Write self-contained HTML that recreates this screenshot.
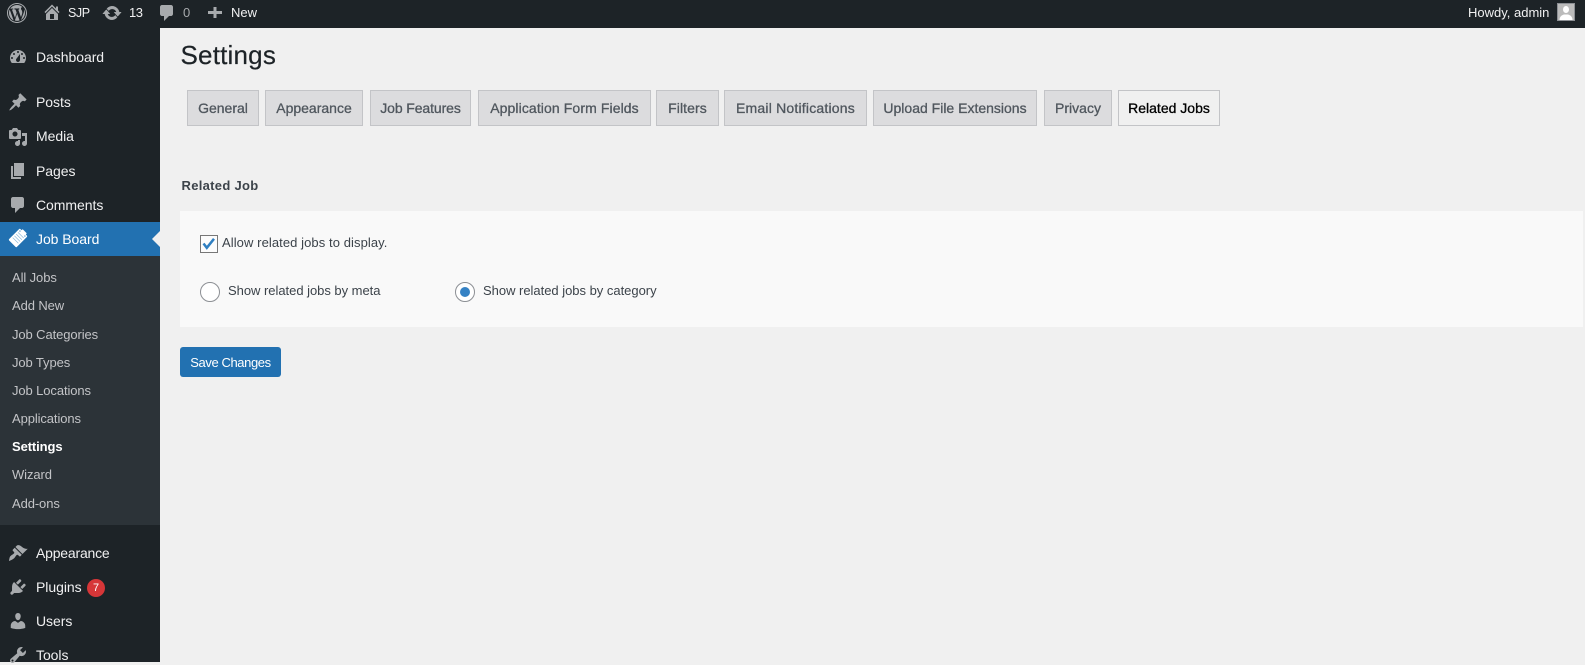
<!DOCTYPE html>
<html><head><meta charset="utf-8"><title>Settings</title>
<style>
*{box-sizing:border-box}
html,body{margin:0;padding:0;width:1585px;height:662px;overflow:hidden;background:#f0f0f0;font-family:"Liberation Sans",Arial,sans-serif;font-size:14px;color:#3c434a}
.a{position:absolute;white-space:nowrap;line-height:20px;height:20px}
.box{position:absolute}
svg.i{position:absolute;fill:#a7aaad;width:20px;height:20px}
.m{color:#f0f0f1;left:36px;font-size:14px;letter-spacing:-.05px}
.s{color:#c3c4c7;left:12px;font-size:13px;letter-spacing:-.1px}
.b{color:#f0f0f1;font-size:13px}
.t{position:absolute;top:90px;height:36px;background:#dcdcde;border:1px solid #c3c4c7;color:#50575e;font-size:14px;line-height:35px;text-align:center;white-space:nowrap;-webkit-text-stroke:.3px currentColor}
</style></head><body>

<div class="box" style="left:0;top:0;width:1585px;height:28px;background:#1d2327"></div>
<div class="box" style="left:0;top:28px;width:160px;height:634px;background:#1d2327"></div>
<div class="box" style="left:0;top:256px;width:160px;height:269px;background:#2c3338"></div>
<div class="box" style="left:0;top:222px;width:160px;height:34px;background:#2271b1"></div>
<div class="box" style="left:152px;top:231px;width:0;height:0;border:8px solid transparent;border-left:0;border-right-color:#f0f0f0"></div>

<!-- admin bar -->
<svg class="i" style="left:7px;top:3px" viewBox="0 0 20 20"><path d="M20 10c0-5.52-4.48-10-10-10S0 4.48 0 10s4.48 10 10 10 10-4.48 10-10zM10 1.01c4.96 0 8.99 4.03 8.99 8.99s-4.03 8.99-8.99 8.99S1.01 14.96 1.01 10 5.04 1.01 10 1.01zM8.01 14.82L4.96 6.61c.49-.03 1.05-.08 1.05-.08.43-.05.38-1.01-.06-.99 0 0-1.29.1-2.13.1-.15 0-.33 0-.52-.01 1.44-2.17 3.9-3.6 6.7-3.6 2.09 0 3.99.79 5.41 2.09-.6-.1-1.45.35-1.45 1.42 0 .66.38 1.22.79 1.88.31.54.5 1.22.5 2.21 0 1.34-1.27 4.48-1.27 4.48l-2.71-7.5c.48-.03.75-.16.75-.16.43-.05.38-1.1-.05-1.08 0 0-1.3.11-2.14.11-.78 0-2.11-.11-2.11-.11-.43-.02-.48 1.06-.05 1.08l.84.08 1.12 3.04zm6.02 2.15L16.64 10s.67-1.69.39-3.81c.63 1.14.94 2.42.94 3.81 0 2.96-1.56 5.58-3.94 7.02v-.05zM2.68 6.54L6.64 17.4c-2.77-1.34-4.67-4.18-4.67-7.4 0-1.24.28-2.41.71-3.46zM10.13 10.74l2.44 6.68c-.79.28-1.63.43-2.5.43-.76 0-1.5-.11-2.2-.32z"/></svg>
<svg class="i" style="left:42px;top:2px" viewBox="0 0 20 20"><path fill-rule="evenodd" d="M16 8.5l1.53 1.53-1.06 1.06L10 4.62l-6.47 6.47-1.06-1.06L10 2.5l4 4v-2h2v4zm-6-2.46l6 5.99V18H4v-5.97zM12 17v-5H8v5h4z"/></svg>
<span class="a b" style="left:68px;top:3px;font-size:12.5px;letter-spacing:-.4px">SJP</span>
<svg class="i" style="left:102px;top:3px" viewBox="0 0 20 20"><path stroke="#a7aaad" stroke-width=".5" d="M10.2 3.28c3.53 0 6.43 2.61 6.92 6h2.08l-3.5 4-3.5-4h2.32c-.45-1.97-2.21-3.45-4.32-3.45-1.45 0-2.73.71-3.54 1.78L4.95 5.66C6.23 4.2 8.11 3.28 10.2 3.28zm-.4 13.44c-3.52 0-6.43-2.61-6.92-6H.8l3.5-4c1.17 1.33 2.33 2.67 3.5 4H5.48c.45 1.97 2.21 3.45 4.32 3.45 1.45 0 2.73-.71 3.54-1.78l1.71 1.95c-1.28 1.46-3.15 2.38-5.25 2.38z"/></svg>
<span class="a b" style="left:129px;top:3px;letter-spacing:-.5px">13</span>
<svg class="i" style="left:157px;top:3px" viewBox="0 0 20 20"><path d="M5 2h9c1.1 0 2 .9 2 2v7c0 1.1-.9 2-2 2h-2l-5 5v-5H5c-1.1 0-2-.9-2-2V4c0-1.1.9-2 2-2z"/></svg>
<span class="a b" style="left:183px;top:3px;color:#a7aaad">0</span>
<svg class="i" style="left:205px;top:3px" viewBox="0 0 20 20"><path d="M3 8h5.500V4h3v4H17v3h-5.500v4h-3v-4H3z"/></svg>
<span class="a b" style="left:231px;top:3px">New</span>
<span class="a b" style="left:1468px;top:3px">Howdy, admin</span>
<div class="box" style="left:1557px;top:3px;width:18px;height:18px;background:#bbb;border:1px solid #8c8f94;overflow:hidden">
<svg width="16" height="16" viewBox="0 0 16 16" style="display:block"><ellipse cx="8" cy="5.500" rx="3" ry="3.500" fill="#fff"/><path d="M1.500 16c0-3.500 2.500-5 4.500-5.500h4c2 .5 4.500 2 4.500 5.500z" fill="#fff"/></svg></div>

<!-- menu -->
<svg class="i" style="left:8px;top:47px" viewBox="0 0 20 20"><path fill-rule="evenodd" d="M3.76 16h12.48c1.1-1.37 1.76-3.11 1.76-5 0-4.42-3.58-8-8-8s-8 3.58-8 8c0 1.89.66 3.63 1.76 5zM10 4c.55 0 1 .45 1 1s-.45 1-1 1-1-.45-1-1 .45-1 1-1zM6 6c.55 0 1 .45 1 1s-.45 1-1 1-1-.45-1-1 .45-1 1-1zm8 0c.55 0 1 .45 1 1s-.45 1-1 1-1-.45-1-1 .45-1 1-1zm-5.37 5.55L12 7v6c0 1.1-.9 2-2 2s-2-.9-2-2c0-.57.24-1.08.63-1.45zM4 10c.55 0 1 .45 1 1s-.45 1-1 1-1-.45-1-1 .45-1 1-1zm12 0c.55 0 1 .45 1 1s-.45 1-1 1-1-.45-1-1 .45-1 1-1z"/></svg>
<span class="a m" style="top:47px">Dashboard</span>
<svg class="i" style="left:8px;top:92px" viewBox="0 0 20 20"><path d="M10.44 3.02l1.82-1.82 6.36 6.35-1.83 1.82c-1.05-.68-2.48-.57-3.41.36l-.75.75c-.92.93-1.04 2.35-.35 3.41l-1.83 1.82-2.41-2.41-2.8 2.79c-.42.42-3.38 2.71-3.8 2.29s1.86-3.39 2.28-3.81l2.79-2.79L4.1 9.36l1.83-1.82c1.05.69 2.48.57 3.4-.36l.75-.75c.93-.92 1.05-2.35.36-3.41z"/></svg>
<span class="a m" style="top:92px">Posts</span>
<svg class="i" style="left:8px;top:127px" viewBox="0 0 20 20"><path fill-rule="evenodd" d="M13 11V4c0-.55-.45-1-1-1h-1.670L9 1H5L3.670 3H2c-.55 0-1 .45-1 1v7c0 .55.45 1 1 1h10c.55 0 1-.45 1-1zM7 4.500c1.380 0 2.500 1.120 2.500 2.500S8.380 9.500 7 9.500 4.500 8.380 4.500 7 5.620 4.500 7 4.500zM14 6h5v10.500c0 1.380-1.120 2.500-2.500 2.500S14 17.880 14 16.500s1.120-2.500 2.500-2.500c.17 0 .34.02.5.05V9h-3V6zm-4 8.050V13h2v3.500c0 1.380-1.120 2.500-2.500 2.500S7 17.880 7 16.500 8.120 14 9.500 14c.17 0 .34.02.5.05z"/></svg>
<span class="a m" style="top:126px">Media</span>
<svg class="i" style="left:8px;top:161px" viewBox="0 0 20 20"><path d="M6 15V2h10v13H6zm-1 1h8v2H3V5h2v11z"/></svg>
<span class="a m" style="top:161px">Pages</span>
<svg class="i" style="left:8px;top:195px" viewBox="0 0 20 20"><path d="M5 2h9c1.100 0 2 .9 2 2v7c0 1.100-.9 2-2 2h-2l-5 5v-5H5c-1.100 0-2-.9-2-2V4c0-1.100.9-2 2-2z"/></svg>
<span class="a m" style="top:195px">Comments</span>
<svg class="box" style="left:6px;top:226px" width="24" height="24" viewBox="0 0 24 24"><g transform="rotate(45 12 12)"><rect x="6.500" y="4" width="11" height="16" rx="1" fill="#fff"/><rect x="9" y="2.500" width="6" height="2.500" rx=".5" fill="#fff"/><path d="M8 8h8M8 10.500h8M8 13h8M8 15.500h8" stroke="#8fbbdc" stroke-width=".7" fill="none"/><circle cx="8.500" cy="5.700" r=".6" fill="#2271b1"/><circle cx="15.500" cy="5.700" r=".6" fill="#2271b1"/></g></svg>
<span class="a m" style="top:229px;color:#fff">Job Board</span>

<span class="a s" style="top:268px">All Jobs</span>
<span class="a s" style="top:296px">Add New</span>
<span class="a s" style="top:325px">Job Categories</span>
<span class="a s" style="top:353px">Job Types</span>
<span class="a s" style="top:381px">Job Locations</span>
<span class="a s" style="top:409px">Applications</span>
<span class="a s" style="top:437px;color:#fff;font-weight:bold">Settings</span>
<span class="a s" style="top:465px">Wizard</span>
<span class="a s" style="top:494px">Add-ons</span>

<svg class="i" style="left:8px;top:543px" viewBox="0 0 20 20"><path d="M14.480 11.060L7.410 3.990l1.500-1.500c.5-.56 2.300-.47 3.510.32 1.210.8 1.430 1.280 2.910 2.100 1.180.64 2.450 1.260 4.450.85zm-.71.71L6.700 4.700 4.930 6.470c-.39.39-.39 1.020 0 1.410l1.060 1.060c.39.39.39 1.030 0 1.420-.6.6-1.430 1.110-2.210 1.690-.35.26-.7.53-1.010.84C1.430 13.250 1 18 1 18s3.750-1.430 5.110-2.770c.31-.31.58-.66.84-1.010.58-.78 1.090-1.610 1.690-2.210.39-.39 1.030-.39 1.420 0l1.060 1.060c.39.39 1.020.39 1.410 0z"/></svg>
<span class="a m" style="top:543px;letter-spacing:-.2px">Appearance</span>
<svg class="i" style="left:8px;top:577px" viewBox="0 0 20 20"><path d="M13.110 4.360L9.870 7.600 8 5.730l3.240-3.240c.35-.34 1.050-.2 1.560.32.52.51.66 1.210.31 1.550zm-8 1.770l.91-1.120 9.010 9.010-1.190.84c-.71.71-2.630 1.160-3.820 1.160H6.140L4.900 17.260c-.59.59-1.540.59-2.120 0-.59-.58-.59-1.530 0-2.120l1.240-1.240v-3.880c0-1.130.4-3.190 1.090-3.890zm7.260 3.970l3.240-3.240c.34-.35 1.040-.21 1.550.31.52.51.66 1.210.31 1.550l-3.240 3.250z"/></svg>
<span class="a m" style="top:577px">Plugins</span>
<div class="box" style="left:87px;top:579px;width:18px;height:18px;border-radius:9px;background:#d63638;color:#fff;font-size:11px;line-height:18px;text-align:center">7</div>
<svg class="i" style="left:8px;top:611px" viewBox="0 0 20 20"><path d="M10 9.250c-2.270 0-2.730-3.440-2.730-3.440C7 4.020 7.820 2 9.970 2c2.160 0 2.980 2.020 2.710 3.810 0 0-.41 3.440-2.680 3.440zm0 2.570L12.720 10c2.390 0 4.520 2.330 4.520 4.530v2.490s-3.650 1.130-7.240 1.130c-3.650 0-7.240-1.130-7.240-1.130v-2.490c0-2.250 1.940-4.480 4.470-4.480z"/></svg>
<span class="a m" style="top:611px">Users</span>
<svg class="i" style="left:8px;top:645px" viewBox="0 0 20 20"><path fill-rule="evenodd" d="M16.680 9.770c-1.340 1.340-3.300 1.670-4.950.99l-5.410 6.520c-.99.99-2.590.99-3.580 0s-.99-2.590 0-3.570l6.520-5.420c-.68-1.650-.35-3.610.99-4.950 1.280-1.280 3.120-1.620 4.720-1.060l-2.890 2.890 2.820 2.820 2.860-2.870c.53 1.580.18 3.390-1.080 4.650zM3.810 16.210c.4.39 1.040.39 1.430 0 .4-.4.4-1.040 0-1.430-.39-.4-1.030-.4-1.430 0-.39.39-.39 1.030 0 1.430z"/></svg>
<span class="a m" style="top:645px">Tools</span>

<!-- content -->
<div class="a" style="left:180.500px;top:40px;height:30px;line-height:30px;font-size:26px;color:#1d2327;letter-spacing:.2px;-webkit-text-stroke:.2px #1d2327">Settings</div>

<div class="t" style="left:187px;width:72px">General</div>
<div class="t" style="left:265px;width:98px">Appearance</div>
<div class="t" style="left:370px;width:101px;letter-spacing:-.1px">Job Features</div>
<div class="t" style="left:478px;width:173px;letter-spacing:.1px">Application Form Fields</div>
<div class="t" style="left:656px;width:63px;letter-spacing:.1px">Filters</div>
<div class="t" style="left:724px;width:143px;letter-spacing:.2px">Email Notifications</div>
<div class="t" style="left:873px;width:164px">Upload File Extensions</div>
<div class="t" style="left:1044px;width:68px">Privacy</div>
<div class="t" style="left:1118px;width:102px;background:#f0f0f0;color:#000">Related Jobs</div>

<div class="a" style="left:181.500px;top:176px;font-weight:bold;font-size:13px;color:#3c434a;letter-spacing:.3px">Related Job</div>

<div class="box" style="left:180px;top:211px;width:1403px;height:116px;background:#f9f9f9"></div>

<div class="box" style="left:200px;top:235px;width:18px;height:18px;border:1px solid #777;background:#fcfcfc"></div>
<svg class="box" style="left:200px;top:235px" width="18" height="18" viewBox="0 0 18 18"><path d="M3.500 8.500L6.800 12.800 14 3.800" fill="none" stroke="#2f7fc1" stroke-width="2.500"/></svg>
<span class="a" style="left:222px;top:233px;font-size:13px;letter-spacing:.08px">Allow related jobs to display.</span>

<div class="box" style="left:200px;top:282px;width:20px;height:20px;border:1px solid #8c8f94;border-radius:50%;background:#fff"></div>
<span class="a" style="left:228px;top:281px;font-size:13px;letter-spacing:-.03px">Show related jobs by meta</span>
<div class="box" style="left:455px;top:282px;width:20px;height:20px;border:1px solid #8c8f94;border-radius:50%;background:#fff"></div>
<div class="box" style="left:460px;top:287px;width:10px;height:10px;border-radius:50%;background:#3582c4"></div>
<span class="a" style="left:483px;top:281px;font-size:13px;letter-spacing:-.02px">Show related jobs by category</span>

<div class="box" style="left:180px;top:347px;width:101px;height:30px;background:#2271b1;border-radius:3px;color:#fff;font-size:13px;line-height:32px;text-align:center;letter-spacing:-.4px">Save Changes</div>

</body></html>
